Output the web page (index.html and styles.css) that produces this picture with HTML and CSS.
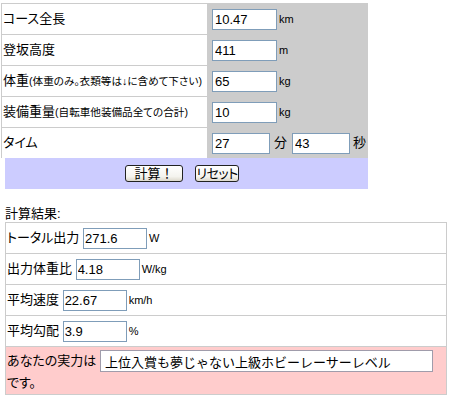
FILE: index.html
```html
<!DOCTYPE html>
<html>
  <head>
    <title>パワー計算</title>
    <link rel="stylesheet" href="styles.css">
  </head>
  <body>

    <form class="calc">
      <table class="input-table">
        <tr>
          <td class="label">コース全長</td>
          <td class="value"><input type="text" class="num" value="10.47"><span class="unit">km</span></td>
        </tr>
        <tr>
          <td class="label">登坂高度</td>
          <td class="value"><input type="text" class="num" value="411"><span class="unit">m</span></td>
        </tr>
        <tr>
          <td class="label">体重<span class="note">(体重のみ。衣類等は↓に含めて下さい)</span></td>
          <td class="value"><input type="text" class="num" value="65"><span class="unit">kg</span></td>
        </tr>
        <tr>
          <td class="label">装備重量<span class="note">(自転車他装備品全ての合計)</span></td>
          <td class="value"><input type="text" class="num" value="10"><span class="unit">kg</span></td>
        </tr>
        <tr>
          <td class="label">タイム</td>
          <td class="value"><input type="text" class="num short" value="27"><span class="time-unit">分</span><input type="text" class="num short" value="43"><span class="time-unit last">秒</span></td>
        </tr>
      </table>
      <div class="buttons">
        <button type="button" class="btn calc-btn">計算！</button>
        <button type="reset" class="btn reset-btn">リセット</button>
      </div>
    </form>

    <p class="caption">計算結果:</p>
    <table class="result-table">
      <tr><td>トータル出力 <input type="text" class="out" value="271.6" readonly><span class="unit">W</span></td></tr>
      <tr><td>出力体重比 <input type="text" class="out" value="4.18" readonly><span class="unit">W/kg</span></td></tr>
      <tr><td>平均速度 <input type="text" class="out" value="22.67" readonly><span class="unit">km/h</span></td></tr>
      <tr><td>平均勾配 <input type="text" class="out" value="3.9" readonly><span class="unit">%</span></td></tr>
      <tr><td class="level">あなたの実力は <input type="text" class="level-out" value="上位入賞も夢じゃない上級ホビーレーサーレベル" readonly><br>です。</td></tr>
    </table>

  </body>
</html>
```

FILE: styles.css
```css
body {
  margin: 0;
  font-family: "Liberation Sans", "Noto Sans CJK JP", sans-serif;
  font-size: 13px;
  color: #000;
  background: #fff;
}
.calc { margin: 0; }

.input-table { border-spacing: 0; margin: 3px 0 0 1px; width: 367px; table-layout: fixed; }
.input-table td { height: 30px; padding: 0; vertical-align: middle; line-height: 16px; white-space: nowrap; }
.input-table .label {
  width: 204px;
  padding-left: 1px;
  border-top: 1px solid #ccc;
  border-left: 1px solid #ccc;
  background: #fff;
  font-feature-settings: "palt";
}
.input-table .value { background: #ccc; padding-left: 5px; border-top: 1px solid #ccc; }
.note { font-size: 10.6px; }

input { font-family: "Liberation Sans", "Noto Sans CJK JP", sans-serif; font-size: 13px; color: #000; }
.num, .out {
  box-sizing: border-box;
  width: 65px;
  height: 21px;
  margin: 0;
  padding: 0 2px;
  border: 1px solid #7f9db9;
  background: #fff;
  vertical-align: middle;
}
.num.short { width: 58px; }
.out { width: 64px; padding: 0 1px; }
.unit { font-size: 11px; margin-left: 2px; vertical-align: middle; }
.time-unit { margin: 0 5px 0 4px; vertical-align: middle; }
.time-unit.last { margin: 0 0 0 3px; }

.buttons {
  margin-left: 5px;
  width: 354px;
  height: 31px;
  padding-right: 9px;
  background: #ccf;
  display: flex;
  justify-content: center;
  align-items: center;
  gap: 12px;
}
.btn {
  height: 17px;
  padding: 0;
  border: 1px solid #222;
  border-radius: 3px;
  background: linear-gradient(#fff, #f4f3ee 70%, #dcd8cc);
  font-family: "Liberation Sans", "Noto Sans CJK JP", sans-serif;
  font-size: 13px;
  line-height: 15px;
  color: #000;
  white-space: nowrap;
  overflow: visible;
}
.calc-btn { width: 58px; }
.reset-btn { width: 44px; letter-spacing: -0.5px; font-feature-settings: "palt"; }

.caption { margin: 16px 0 0 5px; height: 17px; line-height: 17px; }

.result-table { border-spacing: 0; margin-left: 5px; width: 442px; }
.result-table td {
  height: 30px;
  padding: 0 0 0 1px;
  border: 1px solid #ccc;
  border-bottom: none;
  vertical-align: middle;
  line-height: 16px;
  white-space: nowrap;
  font-feature-settings: "palt";
}
.result-table .level {
  height: auto;
  padding-top: 3px;
  background: #fcc;
  border-bottom: 1px solid #ccc;
  line-height: 22px;
  vertical-align: top;
}
.level-out {
  box-sizing: border-box;
  width: 333px;
  height: 22px;
  margin: 0;
  padding: 0 4px;
  border: 1px solid #a09cab;
  background: #fff;
  vertical-align: top;
}
```
